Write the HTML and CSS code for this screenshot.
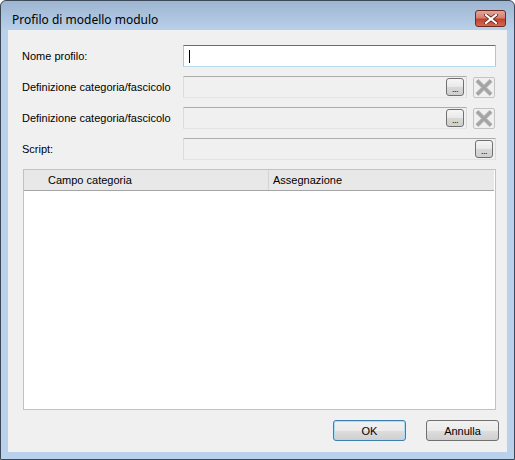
FILE: index.html
```html
<!DOCTYPE html>
<html>
<head>
<meta charset="utf-8">
<link rel="stylesheet" href="styles.css">
</head>
<body>
<div class="window">
  <div class="titlebar">
    <span class="title">Profilo di modello modulo</span>
    <div class="close">
      <svg width="14" height="10" viewBox="0 0 14 10"><path d="M2 1 L12 9 M12 1 L2 9" stroke="#5a1a14" stroke-width="3.6" stroke-linecap="square"/><path d="M2 1 L12 9 M12 1 L2 9" stroke="#ffffff" stroke-width="2.2" stroke-linecap="square"/></svg>
    </div>
  </div>
  <div class="client">
    <div class="form">
      <div class="row">
        <label class="lbl">Nome profilo:</label>
        <div class="tb focus"><span class="caret"></span></div>
      </div>
      <div class="row">
        <label class="lbl">Definizione categoria/fascicolo</label>
        <div class="tb disabled"><span class="dots">...</span></div>
        <div class="xbtn"><svg width="18" height="17" viewBox="0 0 18 17"><path d="M2 1.5 L16 15.5 M16 1.5 L2 15.5" stroke="#b4b4b4" stroke-width="4.2"/><path d="M2 1.5 L16 15.5 M16 1.5 L2 15.5" stroke="#a2a2a2" stroke-width="2.2"/></svg></div>
      </div>
      <div class="row">
        <label class="lbl">Definizione categoria/fascicolo</label>
        <div class="tb disabled"><span class="dots">...</span></div>
        <div class="xbtn"><svg width="18" height="17" viewBox="0 0 18 17"><path d="M2 1.5 L16 15.5 M16 1.5 L2 15.5" stroke="#b4b4b4" stroke-width="4.2"/><path d="M2 1.5 L16 15.5 M16 1.5 L2 15.5" stroke="#a2a2a2" stroke-width="2.2"/></svg></div>
      </div>
      <div class="row">
        <label class="lbl">Script:</label>
        <div class="tb disabled"><span class="dots">...</span></div>
      </div>
    </div>
    <div class="list">
      <div class="lhead">
        <div class="col c1">Campo categoria</div>
        <div class="col c2">Assegnazione</div>
      </div>
      <div class="lbody"></div>
    </div>
    <div class="buttons">
      <button class="btn default">OK</button>
      <button class="btn">Annulla</button>
    </div>
  </div>
</div>
</body>
</html>
```

FILE: styles.css
```css
html, body {
  margin: 0;
  padding: 0;
  background: #ffffff;
}
body {
  font-family: "Liberation Sans", Arial, sans-serif;
  font-size: 11px;
  color: #000;
}
.window {
  width: 515px;
  height: 460px;
  box-sizing: border-box;
  border: 1px solid #3a4858;
  border-radius: 6px 6px 0 0;
  background: linear-gradient(#9db5d0 0px, #b9d1ea 30px, #b9d1ea 100%);
  display: flex;
  flex-direction: column;
  overflow: hidden;
}
.titlebar {
  height: 29px;
  display: flex;
  align-items: flex-start;
  justify-content: space-between;
  padding: 0 8px 0 11px;
}
.title {
  font-family: "Noto Sans", "Open Sans", sans-serif;
  font-size: 12px;
  margin-top: 10px;
  color: #000;
}
.close {
  width: 29px;
  height: 15px;
  margin-top: 9px;
  border: 1px solid #6b2a24;
  border-radius: 3px;
  background: linear-gradient(#e2a69b 0%, #d57f6f 45%, #c2412c 55%, #d36a52 100%);
  display: flex;
  align-items: center;
  justify-content: center;
}
.client {
  flex: 1;
  margin: 0 7px 7px 7px;
  background: #f0f0f0;
  display: flex;
  flex-direction: column;
  padding: 15px 11px 11px 14px;
}
.form {
  display: flex;
  flex-direction: column;
  gap: 9px;
}
.row {
  display: flex;
  align-items: center;
  height: 22px;
}
.lbl {
  width: 161px;
  flex: none;
}
.tb {
  flex: 1;
  height: 22px;
  box-sizing: border-box;
  border: 1px solid;
  border-radius: 1px;
  position: relative;
  display: flex;
  align-items: center;
  justify-content: flex-end;
  padding-right: 2px;
}
.tb.focus {
  background: #fff;
  border-color: #3d7bad #a4c9e3 #b7d9ed #a4c9e3;
  justify-content: flex-start;
  padding-left: 5px;
}
.caret {
  width: 1px;
  height: 13px;
  background: #000;
}
.tb.disabled {
  background: #f0f0f0;
  border-color: #acacac #dcdcdc #e3e3e3 #dcdcdc;
}
.dots {
  width: 16px;
  height: 16px;
  border: 1px solid #707070;
  border-radius: 3px;
  background: linear-gradient(#f6f6f6 0%, #e8e8e8 50%, #d8d8d8 51%, #cfcfcf 100%);
  font-size: 9px;
  line-height: 20px;
  text-align: center;
  letter-spacing: -0.5px;
  overflow: hidden;
  color: #000;
}
.xbtn {
  width: 20px;
  height: 19px;
  border: 1px solid #c3c3c3;
  border-radius: 2px;
  margin-left: 6px;
  margin-right: 1px;
  display: flex;
  align-items: center;
  justify-content: center;
  background: #f0f0f0;
}
.list {
  margin-top: 9px;
  flex: 1;
  border: 1px solid #c2c2c2;
  background: #fff;
  display: flex;
  flex-direction: column;
  margin-right: 0;
  margin-left: 1px;
}
.lhead {
  height: 20px;
  display: flex;
  background: #e8e8e8;
  border-bottom: 1px solid #a5a5a5;
  margin-right: 1px;
}
.col {
  display: flex;
  align-items: center;
}
.c1 {
  width: 220px;
  padding-left: 24px;
  border-right: 1px solid #d4d4d4;
}
.c2 {
  padding-left: 4px;
}
.lbody {
  flex: 1;
}
.buttons {
  display: flex;
  justify-content: flex-end;
  gap: 20px;
  margin-top: 10px;
  margin-right: -3px;
}
.btn {
  width: 73px;
  height: 21px;
  box-sizing: border-box;
  border: 1px solid #707070;
  border-radius: 3px;
  background: linear-gradient(#f2f2f2 0%, #ebebeb 50%, #dddddd 51%, #cfcfcf 100%);
  font-family: "Liberation Sans", Arial, sans-serif;
  font-size: 11px;
  color: #000;
  padding: 0;
}
.btn.default {
  border-color: #3c7fb1;
  box-shadow: inset 0 0 0 1px #a9dcf5;
}
```
